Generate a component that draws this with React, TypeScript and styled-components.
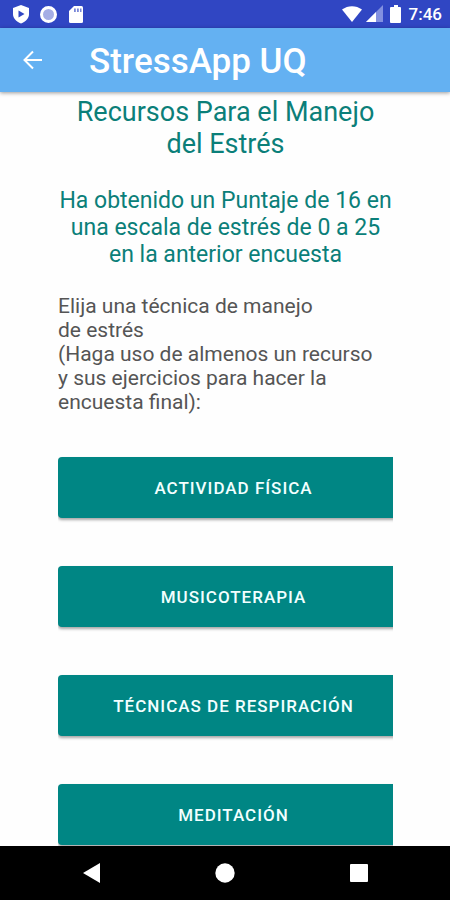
import React from "react";
import styled, { createGlobalStyle } from "styled-components";

const GlobalStyle = createGlobalStyle`
  *, *::before, *::after { box-sizing: border-box; }
  body { margin: 0; background: #fefefe; font-family: Roboto, "Noto Sans", sans-serif; }
`;

const Screen = styled.div`
  display: flex;
  flex-direction: column;
  height: 100vh;
  overflow: hidden;
`;

const StatusBar = styled.div`
  display: flex;
  flex: none;
  align-items: center;
  justify-content: space-between;
  height: 28px;
  padding: 0 8px 0 12px;
  background: #3046c3;
  color: #fff;
`;

const StatusGroup = styled.div<{ $gap: number }>`
  display: flex;
  align-items: center;
  gap: ${({ $gap }) => $gap}px;
  svg { display: block; }
`;

const Clock = styled.time`
  margin-left: 4px;
  font-size: 17px;
  line-height: 28px;
  font-weight: 500;
`;

const AppBar = styled.header`
  display: flex;
  flex: none;
  align-items: center;
  gap: 40px;
  height: 64px;
  padding: 0 16px;
  background: #64b1f2;
  color: #fff;
  box-shadow: 0 1px 4px rgba(0, 0, 0, 0.4);
  z-index: 1;
`;

const IconButton = styled.button`
  display: flex;
  align-items: center;
  justify-content: center;
  width: 33px;
  height: 40px;
  padding: 0;
  border: 0;
  background: none;
  color: inherit;
  cursor: pointer;
`;

const AppTitle = styled.h1`
  margin: 4px 0 0;
  font-size: 35px;
  line-height: 44px;
  font-weight: 500;
`;

const Content = styled.main`
  flex: 1;
  min-height: 0;
  margin: 0 57px 0 58px;
  padding-top: 4px;
  overflow: hidden;
`;

const Heading = styled.h2`
  margin: 0 0 27px;
  color: #0b7f79;
  font-size: 27px;
  line-height: 32px;
  font-weight: 400;
  text-align: center;
`;

const Score = styled.p`
  margin: 0 0 26px;
  color: #0b7f79;
  font-size: 23px;
  line-height: 27px;
  text-align: center;
`;

const Instructions = styled.p`
  margin: 0 0 43px;
  color: #555;
  font-size: 21px;
  line-height: 24px;
  white-space: nowrap;
`;

const Techniques = styled.div`
  display: flex;
  flex-direction: column;
  gap: 48px;
  margin-right: -16px;
`;

const TechniqueButton = styled.button`
  flex: none;
  height: 61px;
  padding: 0;
  border: 0;
  border-radius: 4px;
  background: #008684;
  box-shadow: 0 2px 3px rgba(0, 0, 0, 0.35);
  color: #f2ffff;
  font-family: inherit;
  font-size: 17px;
  line-height: 24px;
  font-weight: 500;
  letter-spacing: 1px;
  text-transform: uppercase;
  cursor: pointer;
`;

const NavBar = styled.nav`
  display: flex;
  flex: none;
  align-items: center;
  justify-content: space-around;
  height: 54px;
  padding: 0 24px;
  background: #000;
  color: #fff;
`;

const techniques = ["Actividad física", "Musicoterapia", "Técnicas de respiración", "Meditación"];

export default function App() {
  return (
    <Screen>
      <GlobalStyle />
      <StatusBar>
        <StatusGroup $gap={9}>
          <svg width="18" height="20" viewBox="0 0 18 20" aria-hidden="true">
            <path d="M9 1 17 4v6c0 4-3 7.500-8 9.500C4 17.500 1 14 1 10V4Z" fill="#fff" />
            <path d="M6.500 6.500v7l6-3.500Z" fill="#3046c3" />
          </svg>
          <svg width="19" height="19" viewBox="0 0 19 19" aria-hidden="true">
            <circle cx="9.500" cy="9.500" r="7" fill="#a5aee5" stroke="#fff" strokeWidth="3" />
          </svg>
          <svg width="18" height="19" viewBox="0 0 18 19" aria-hidden="true">
            <path d="M7 1h7.500a1.500 1.500 0 0 1 1.500 1.500v14a1.500 1.500 0 0 1-1.500 1.500h-11A1.500 1.500 0 0 1 2 16.500V6Z" fill="#fff" />
            <path d="M7 3.500h1.800v3.500H7zM10 3.500h1.800v3.500H10zM13 3.500h1.500v3.500H13z" fill="#7a88d9" />
          </svg>
        </StatusGroup>
        <StatusGroup $gap={3}>
          <svg width="22" height="18" viewBox="0 0 22 18" aria-hidden="true">
            <path d="M1 4.500C7 0 15 0 21 4.500L11 17Z" fill="#fff" />
          </svg>
          <svg width="17" height="18" viewBox="0 0 17 18" aria-hidden="true">
            <path d="M17 0v17H0Z" fill="#8290e0" />
            <path d="M10 7v10H0Z" fill="#fff" />
          </svg>
          <svg width="16" height="18" viewBox="1 0 16 18" aria-hidden="true">
            <path d="M9 0h4v2h2q1 0 1 1v14q0 1-1 1H6q-1 0-1-1V3q0-1 1-1h3Z" fill="#fff" />
          </svg>
          <Clock>7:46</Clock>
        </StatusGroup>
      </StatusBar>

      <AppBar>
        <IconButton type="button" aria-label="Volver">
          <svg width="20" height="20" viewBox="0 0 20 20" fill="none" stroke="#fff" strokeWidth="2" aria-hidden="true">
            <path d="M19 10H2M10 1.500 1.500 10l8.500 8.500" />
          </svg>
        </IconButton>
        <AppTitle>StressApp UQ</AppTitle>
      </AppBar>

      <Content>
        <Heading>Recursos Para el Manejo del Estrés</Heading>
        <Score>Ha obtenido un Puntaje de 16 en una escala de estrés de 0 a 25 en la anterior encuesta</Score>
        <Instructions>
          Elija una técnica de manejo<br />
          de estrés<br />
          (Haga uso de almenos un recurso<br />
          y sus ejercicios para hacer la<br />
          encuesta final):
        </Instructions>
        <Techniques>
          {techniques.map((name) => (
            <TechniqueButton type="button" key={name}>{name}</TechniqueButton>
          ))}
        </Techniques>
      </Content>

      <NavBar aria-label="Sistema">
        <IconButton type="button" aria-label="Atrás">
          <svg width="20" height="20" viewBox="0 0 20 20" aria-hidden="true"><path d="M2 10 19 0v20Z" fill="#fff" /></svg>
        </IconButton>
        <IconButton type="button" aria-label="Inicio">
          <svg width="20" height="20" viewBox="0 0 20 20" aria-hidden="true"><circle cx="10" cy="10" r="9.700" fill="#fff" /></svg>
        </IconButton>
        <IconButton type="button" aria-label="Recientes">
          <svg width="20" height="20" viewBox="0 0 20 20" aria-hidden="true"><rect x="1" y="1" width="18" height="18" rx="1" fill="#fff" /></svg>
        </IconButton>
      </NavBar>
    </Screen>
  );
}
